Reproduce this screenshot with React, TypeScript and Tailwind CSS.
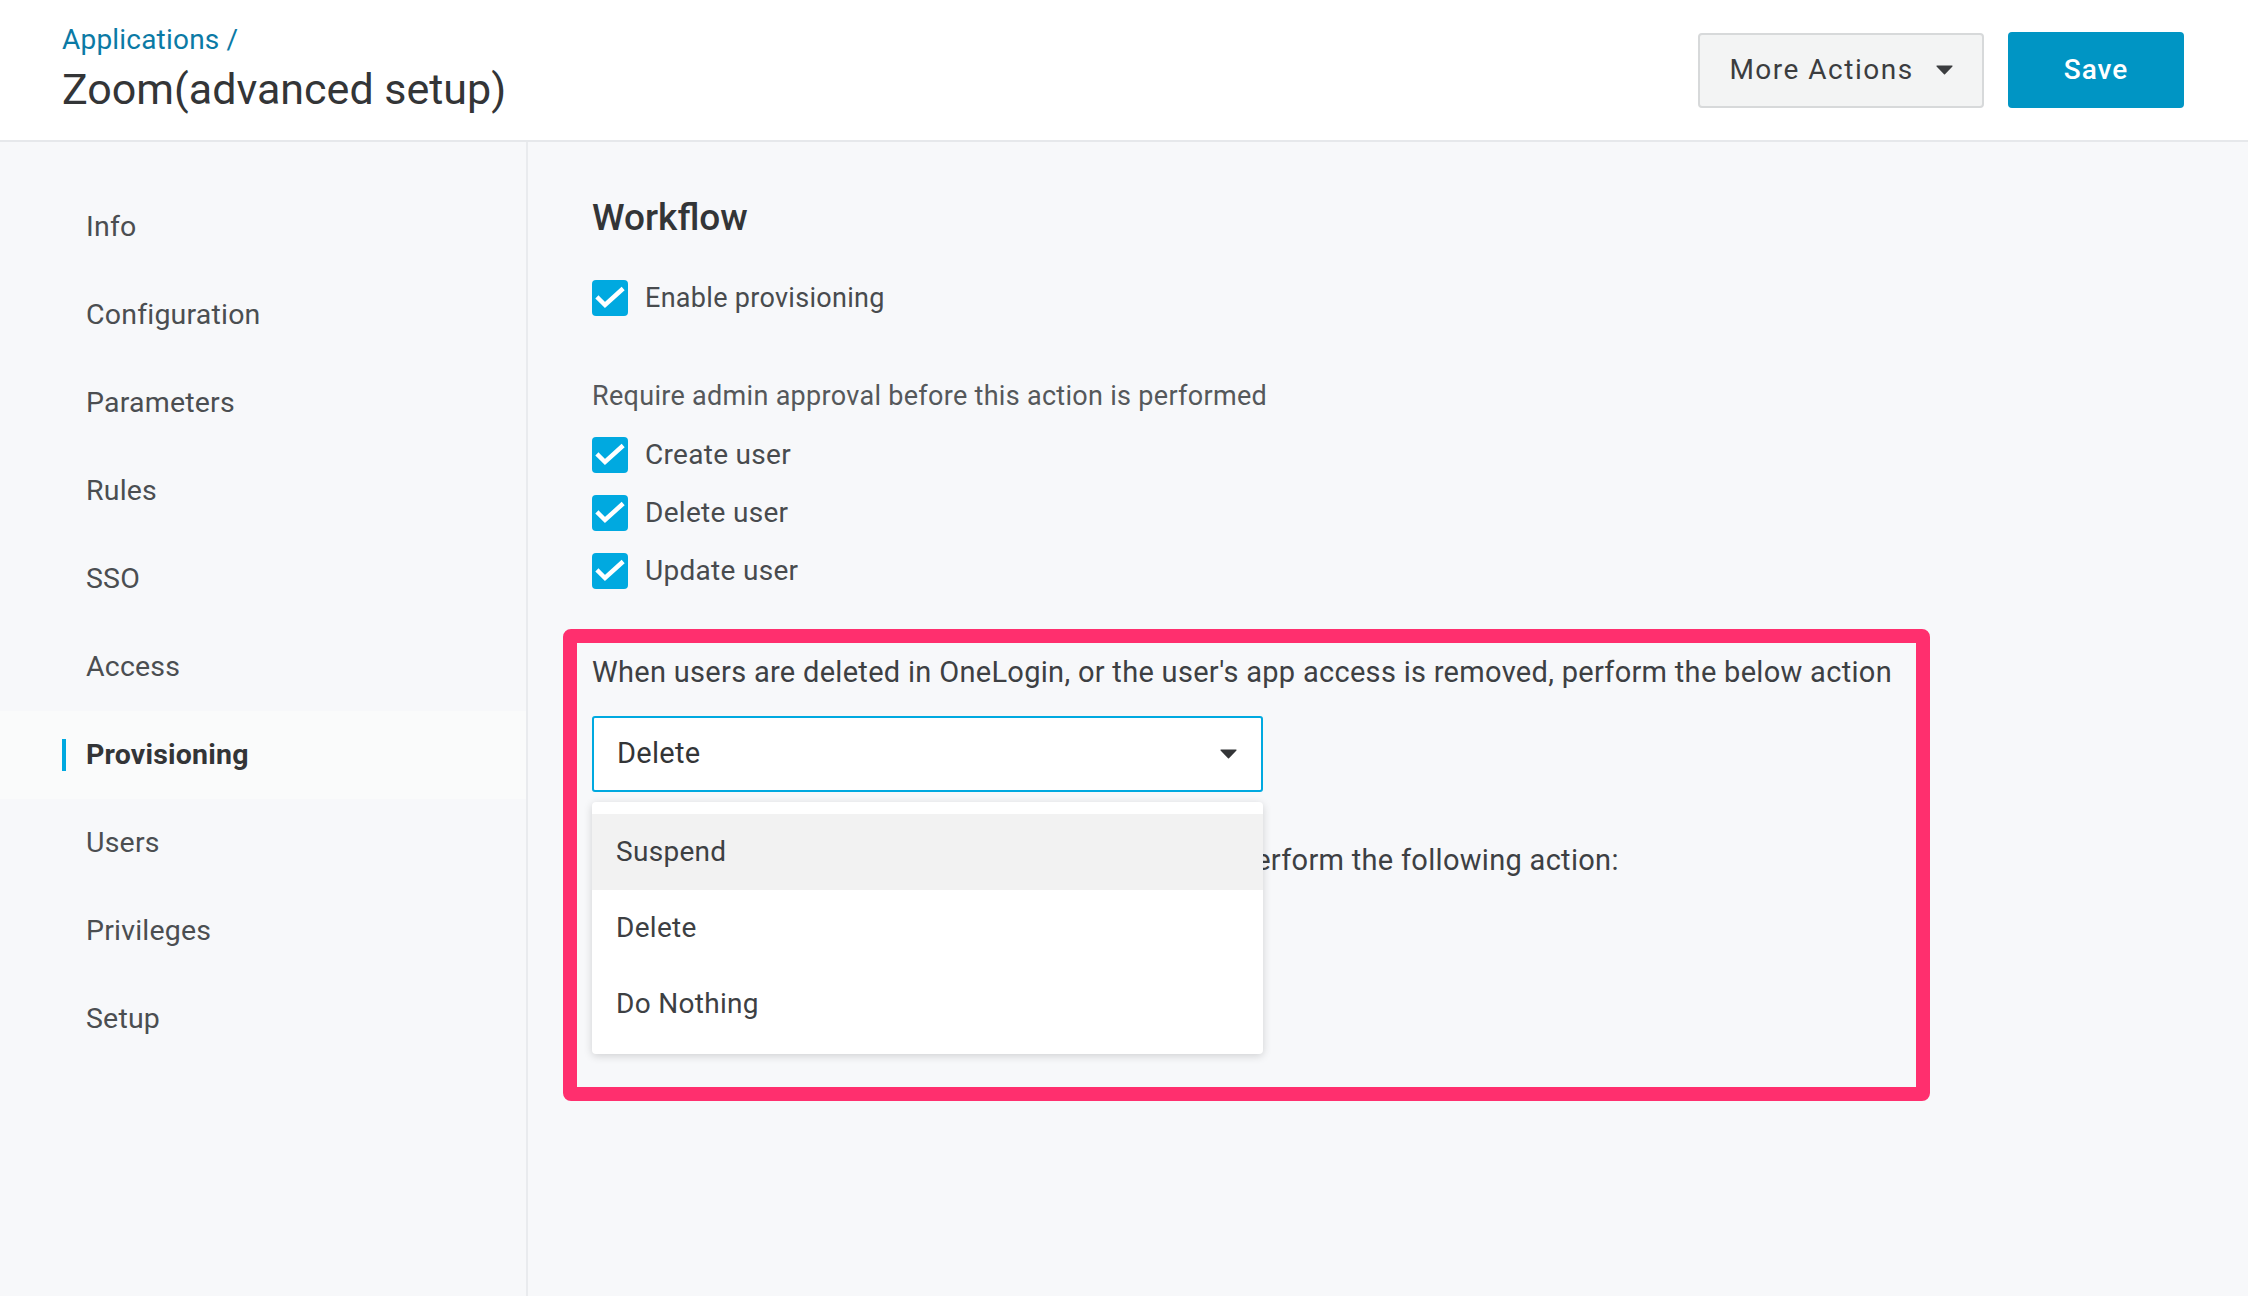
import React from 'react';

const navItems = ['Info', 'Configuration', 'Parameters', 'Rules', 'SSO', 'Access', 'Provisioning', 'Users', 'Privileges', 'Setup'];

const Caret = ({ className }: { className?: string }) => (
  <svg viewBox="0 0 17 10" className={className} fill="currentColor">
    <path d="M1 0.5h15a0.6 0.6 0 0 1 0.45 1L9 9.3a0.7 0.7 0 0 1-1 0L0.55 1.5A0.6 0.6 0 0 1 1 0.5z" />
  </svg>
);

const CheckRow = ({ label, size = 'text-[28px]' }: { label: string; size?: string }) => (
  <label className="flex items-center h-[36px] gap-[17px]">
    <span className="w-[36px] h-[36px] rounded-[4px] bg-[#00a9e0] flex items-center justify-center shrink-0">
      <svg viewBox="0 0 36 36" className="w-[36px] h-[36px]">
        <path d="M6.5 18.5l6.5 6.5 16.5-15" fill="none" stroke="#fff" strokeWidth="4.5" strokeLinecap="square" />
      </svg>
    </span>
    <span className={`${size} text-[#484b4e] tracking-[0.3px]`}>{label}</span>
  </label>
);

export default function App() {
  return (
    <div className="min-h-[1296px] bg-[#f7f8fa] flex flex-col" style={{ fontFamily: 'Roboto, "Liberation Sans", sans-serif' }}>
      {/* Header */}
      <header className="h-[142px] bg-white border-b-2 border-[#e6e8eb] flex justify-between items-start pl-[62px] pr-[64px]">
        <div className="flex flex-col pt-[22px]">
          <a className="text-[28px] leading-[36px] text-[#0b7aa5] tracking-[0.2px]">Applications /</a>
          <h1 className="mt-[4px] text-[43px] leading-[54px] text-[#333537]">Zoom(advanced setup)</h1>
        </div>
        <div className="flex items-center gap-[24px] pt-[32px]">
          <button className="h-[75px] w-[286px] rounded-[4px] border-2 border-[#d7d9da] bg-[#f3f4f4] flex items-center justify-center gap-[22px] text-[28px] text-[#3b3d3f] tracking-[1.5px]">
            More Actions
            <Caret className="w-[17px] h-[10px] text-[#3b3d3f]" />
          </button>
          <button className="h-[76px] w-[176px] rounded-[4px] bg-[#0095c4] text-white text-[28px] font-medium tracking-[1px]">
            Save
          </button>
        </div>
      </header>

      <div className="flex flex-1">
        {/* Sidebar */}
        <nav className="w-[528px] border-r-2 border-[#e9ebee] pt-[41px] flex flex-col">
          {navItems.map((item) => {
            const active = item === 'Provisioning';
            return (
              <div key={item} className={`h-[88px] flex items-center pl-[62px] ${active ? 'bg-[#fafbfb]' : ''}`}>
                <span className={`w-[4px] h-[32px] ${active ? 'bg-[#00a9e0]' : ''}`} />
                <span className={`ml-[20px] text-[28.5px] tracking-[0.2px] ${active ? 'font-bold text-[#333537]' : 'text-[#4b4e51]'}`}>{item}</span>
              </div>
            );
          })}
        </nav>

        {/* Main */}
        <main className="flex-1 pl-[64px] pt-[55px]">
          <h2 className="text-[37px] leading-[42px] font-medium text-[#333537]">Workflow</h2>

          <div className="mt-[41px]">
            <CheckRow label="Enable provisioning" size="text-[27px]" />
          </div>

          <p className="mt-[62px] text-[27px] leading-[36px] text-[#55585b] tracking-[0.3px]">Require admin approval before this action is performed</p>

          <div className="mt-[23px] flex flex-col gap-[22px]">
            <CheckRow label="Create user" />
            <CheckRow label="Delete user" />
            <CheckRow label="Update user" />
          </div>

          <section className="mt-[40px] ml-[-29px] w-[1367px] border-[14px] border-[#ff2f6e] rounded-[8px] pl-[15px] pt-[11px] pb-[209px]">
            <p className="text-[29px] leading-[36px] text-[#3d4043] tracking-[0.3px] whitespace-nowrap">
              When users are deleted in OneLogin, or the user's app access is removed, perform the below action
            </p>

            <div className="relative mt-[26px]">
              <div className="w-[671px] h-[76px] bg-white border-2 border-[#00a9e0] rounded-[3px] flex items-center justify-between pl-[23px] pr-[24px]">
                <span className="text-[29px] text-[#333537] tracking-[0.3px]">Delete</span>
                <Caret className="w-[17px] h-[10px] text-[#333537]" />
              </div>

              <p className="mt-[50px] text-[29px] leading-[36px] text-[#3d4043] tracking-[0.3px] whitespace-nowrap">
                When user accounts are suspended in OneLogin, perform the following action:
              </p>

              {/* open dropdown menu */}
              <ul className="absolute left-0 top-[86px] w-[671px] bg-white rounded-[4px] shadow-[0_2px_8px_rgba(0,0,0,0.16)] py-[12px]">
                {['Suspend', 'Delete', 'Do Nothing'].map((opt, i) => (
                  <li key={opt} className={`h-[76px] flex items-center pl-[24px] text-[28px] text-[#3d4043] tracking-[0.3px] ${i === 0 ? 'bg-[#f2f2f2]' : ''}`}>
                    {opt}
                  </li>
                ))}
              </ul>
            </div>
          </section>
        </main>
      </div>
    </div>
  );
}
